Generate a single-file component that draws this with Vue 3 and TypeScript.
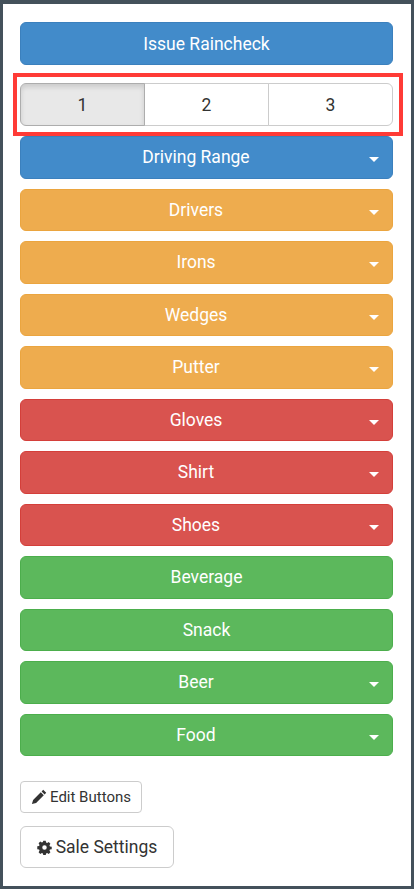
<script setup lang="ts">
interface Item { label: string; tone: string; caret: boolean }
const items: Item[] = [
  { label: 'Driving Range', tone: 'blue', caret: true },
  { label: 'Drivers', tone: 'orange', caret: true },
  { label: 'Irons', tone: 'orange', caret: true },
  { label: 'Wedges', tone: 'orange', caret: true },
  { label: 'Putter', tone: 'orange', caret: true },
  { label: 'Gloves', tone: 'red', caret: true },
  { label: 'Shirt', tone: 'red', caret: true },
  { label: 'Shoes', tone: 'red', caret: true },
  { label: 'Beverage', tone: 'green', caret: false },
  { label: 'Snack', tone: 'green', caret: false },
  { label: 'Beer', tone: 'green', caret: true },
  { label: 'Food', tone: 'green', caret: true },
]
</script>

<template>
  <div class="frame">
    <main class="panel">
      <button class="btn blue raincheck">Issue Raincheck</button>
      <div class="group-wrap">
        <div class="group">
          <button class="seg active">1</button>
          <button class="seg">2</button>
          <button class="seg">3</button>
        </div>
        <div class="highlight"></div>
      </div>
      <div class="list">
        <button v-for="item in items" :key="item.label" class="btn" :class="[item.tone, { 'has-caret': item.caret }]">
          {{ item.label }}
          <span v-if="item.caret" class="caret"></span>
        </button>
      </div>
      <button class="small">
        <svg viewBox="0 0 16 16" width="16" height="16"><path fill="#333" d="M12.2 0.8l3 3 -1.6 1.6 -3-3zM9.8 3.2l3 3 -7.7 7.7 -4.2 1.2 1.2-4.2z"/></svg>
        Edit Buttons
      </button>
      <button class="settings">
        <svg viewBox="0 0 16 16" width="15" height="15"><path fill="#333" fill-rule="evenodd" d="M6.7 0.8h2.6l.4 1.9 1.1.5 1.7-1 1.8 1.8-1 1.7.5 1.1 1.9.4v2.6l-1.9.4-.5 1.1 1 1.7-1.8 1.8-1.7-1-1.1.5-.4 1.9H6.7l-.4-1.9-1.1-.5-1.7 1-1.8-1.8 1-1.7-.5-1.1-1.9-.4V6.7l1.9-.4.5-1.1-1-1.7 1.8-1.8 1.7 1 1.1-.5zM8 5.6a2.4 2.4 0 1 0 0 4.8a2.4 2.4 0 1 0 0-4.8z"/></svg>
        Sale Settings
      </button>
    </main>
  </div>
</template>

<style>
html, body { margin: 0; background: #44515b; }
</style>

<style scoped>
.frame {
  box-sizing: border-box;
  width: 414px;
  height: 889px;
  padding: 4px 3px 3px;
  background: #44515b;
  font-family: Roboto, "Liberation Sans", sans-serif;
}
.panel {
  box-sizing: border-box;
  height: 882px;
  padding: 18px 18px 0 17px;
  background: #fff;
  display: flex;
  flex-direction: column;
  align-items: flex-start;
}
button { font-family: inherit; cursor: pointer; }
.btn {
  position: relative;
  box-sizing: border-box;
  width: 373px;
  height: 42.5px;
  padding: 1px 0 0;
  border: 1px solid;
  border-radius: 6px;
  color: #fff;
  font-size: 17.5px;
  line-height: 1;
}
.has-caret { padding-right: 21px; }
.blue { background: #428bca; border-color: #3b80bd; }
.orange { background: #eeac4e; border-color: #eba53f; }
.red { background: #d9534f; border-color: #d43f3a; }
.green { background: #5cb85c; border-color: #4cae4c; }
.raincheck { flex: none; padding-top: 2px; }
.caret {
  position: absolute;
  right: 13px;
  top: 20px;
  width: 0;
  height: 0;
  border-left: 5px solid transparent;
  border-right: 5px solid transparent;
  border-top: 5px solid #fff;
}
.group-wrap {
  position: relative;
  margin-top: 18.5px;
  margin-bottom: 10px;
}
.group { display: flex; width: 373px; height: 43px; }
.seg {
  flex: 1 1 0;
  margin-left: -1px;
  padding: 0;
  border: 1px solid #ccc;
  background: #fff;
  color: #333;
  font-size: 17.5px;
}
.seg:first-child { margin-left: 0; border-radius: 6px 0 0 6px; }
.seg:last-child { border-radius: 0 6px 6px 0; }
.active {
  position: relative;
  background: #e8e8e8;
  border-color: #adadad;
  box-shadow: inset 0 3px 5px rgba(0, 0, 0, 0.125);
}
.highlight {
  position: absolute;
  left: -7px;
  top: -10px;
  width: 390px;
  height: 62.5px;
  box-sizing: border-box;
  border: 4px solid #ff3b36;
  pointer-events: none;
}
.list {
  display: flex;
  flex-direction: column;
  gap: 10px;
}
.small {
  display: flex;
  align-items: center;
  justify-content: center;
  gap: 3px;
  box-sizing: border-box;
  width: 122px;
  height: 32px;
  margin-top: 25px;
  padding: 0;
  border: 1px solid #ccc;
  border-radius: 4px;
  background: #fff;
  color: #333;
  font-size: 15px;
}
.settings {
  display: flex;
  align-items: center;
  justify-content: center;
  gap: 4px;
  box-sizing: border-box;
  width: 154px;
  height: 42px;
  margin-top: 13px;
  padding: 0;
  border: 1px solid #ccc;
  border-radius: 6px;
  background: #fff;
  color: #333;
  font-size: 17.5px;
}
</style>
